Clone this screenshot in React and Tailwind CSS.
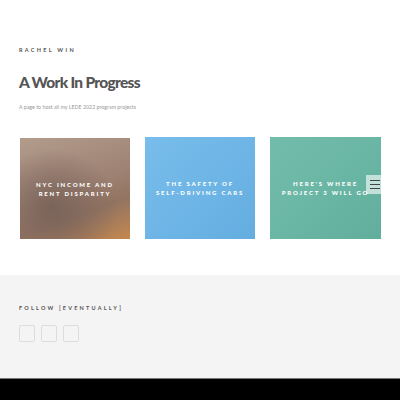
export default function App() {
  const font = { fontFamily: 'Lato, "Open Sans", sans-serif' };
  return (
    <div className="w-[400px] h-[400px] bg-white overflow-hidden flex flex-col" style={font}>
      <div className="h-[275px] flex flex-col px-[19px] pt-[47px] relative">
        <div className="text-[5.5px] leading-[6px] font-bold tracking-[2.3px] text-[#555]">RACHEL WIN</div>
        <h1 className="mt-[20px] text-[15.5px] leading-[18px] font-black text-[#555] tracking-[-0.7px]">A Work In Progress</h1>
        <p className="mt-[13px] text-[5.3px] leading-[6px] text-[#999]">A page to host all my LEDE 2022 program projects</p>
        <div className="mt-[27px] ml-[1px] flex gap-[15px] items-start">
          <div className="w-[110px] h-[101px] mt-[1px] flex items-center justify-center text-center bg-[radial-gradient(ellipse_at_30%_70%,#7a635a_0%,transparent_60%),linear-gradient(160deg,#b39c8c_0%,#a08576_45%,#937462_70%,#c4884f_100%)]">
            <div className="text-white font-black text-[6px] leading-[9px] tracking-[1.8px]">NYC INCOME AND<br />RENT DISPARITY</div>
          </div>
          <div className="w-[110px] h-[102px] flex items-center justify-center text-center bg-[linear-gradient(135deg,#78bdeb_0%,#6cb4e5_60%,#64ade0_100%)]">
            <div className="text-white font-black text-[6px] leading-[9px] tracking-[1.8px]">THE SAFETY OF<br />SELF-DRIVING CARS</div>
          </div>
          <div className="w-[111px] h-[102px] flex items-center justify-center text-center bg-[linear-gradient(135deg,#72bcab_0%,#69b5a3_60%,#62ae9c_100%)]">
            <div className="text-white font-black text-[6px] leading-[9px] tracking-[1.8px]">HERE'S WHERE<br />PROJECT 3 WILL GO</div>
          </div>
        </div>
        <div className="absolute left-[366px] top-[175px] w-[17px] h-[19px] bg-white/60 flex flex-col items-center justify-center gap-[3px]">
          <div className="w-[10px] h-[1px] bg-[#444]" />
          <div className="w-[10px] h-[1px] bg-[#444]" />
          <div className="w-[10px] h-[1px] bg-[#444]" />
        </div>
      </div>
      <div className="h-[103px] bg-[#f4f4f4] px-[19px] pt-[30px]">
        <div className="text-[5.5px] leading-[6px] font-bold tracking-[2.2px] text-[#555]">FOLLOW [EVENTUALLY]</div>
        <div className="mt-[14px] flex gap-[6px]">
          <div className="w-[16px] h-[17px] border border-[#ddd] rounded-[2px]" />
          <div className="w-[16px] h-[17px] border border-[#ddd] rounded-[2px]" />
          <div className="w-[16px] h-[17px] border border-[#ddd] rounded-[2px]" />
        </div>
      </div>
      <div className="flex-1 bg-black border-t border-[#777]" />
    </div>
  );
}
